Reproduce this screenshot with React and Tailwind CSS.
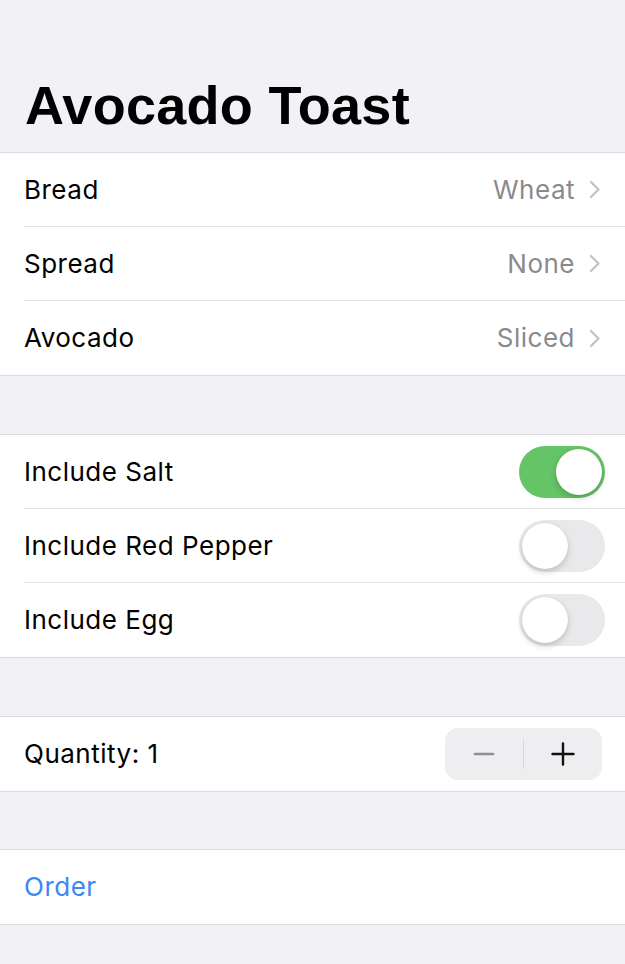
import { useState } from 'react';

const body = { fontFamily: 'Inter, "Liberation Sans", sans-serif' };

function Chevron() {
  return (
    <svg width="12" height="19" viewBox="0 0 12 19" className="ml-[14px]">
      <path d="M2 2 L9.5 9.5 L2 17" fill="none" stroke="#c4c4c8" strokeWidth="2.4" strokeLinecap="round" strokeLinejoin="round" />
    </svg>
  );
}

function Toggle({ on, onChange }) {
  return (
    <button
      onClick={onChange}
      className={`relative w-[86px] h-[52px] rounded-full transition-colors ${on ? 'bg-[#65c466]' : 'bg-[#e9e9eb]'}`}
    >
      <span
        className={`absolute top-[3px] w-[46px] h-[46px] rounded-full bg-white shadow-[0_3px_6px_rgba(0,0,0,0.18),0_0_1px_rgba(0,0,0,0.12)] transition-all ${
          on ? 'left-[37px]' : 'left-[3px]'
        }`}
      />
    </button>
  );
}

function Section({ children }) {
  return <div className="bg-white border-y border-[#dcdce0]">{children}</div>;
}

function Row({ children, last }) {
  return (
    <div className={`ml-[24px] h-[74px] flex items-center ${last ? 'h-[73px]' : 'border-b border-[#e2e2e6]'}`}>
      {children}
    </div>
  );
}

export default function App() {
  const [salt, setSalt] = useState(true);
  const [pepper, setPepper] = useState(false);
  const [egg, setEgg] = useState(false);
  const [qty, setQty] = useState(1);

  const pickers = [
    ['Bread', 'Wheat'],
    ['Spread', 'None'],
    ['Avocado', 'Sliced'],
  ];
  const toggles = [
    ['Include Salt', salt, () => setSalt(!salt)],
    ['Include Red Pepper', pepper, () => setPepper(!pepper)],
    ['Include Egg', egg, () => setEgg(!egg)],
  ];

  return (
    <div className="min-h-[964px] bg-[#f1f1f6] text-black text-[26px] leading-none tracking-[0.5px]" style={body}>
      {/* Large title */}
      <div className="h-[152px] flex items-end px-[25px] pb-[20px]">
        <h1
          className="text-[54px] font-bold leading-none tracking-[0.3px]"
          style={{ fontFamily: '"Liberation Sans", Arial, sans-serif' }}
        >
          Avocado Toast
        </h1>
      </div>

      {/* Pickers */}
      <Section>
        {pickers.map(([label, value], i) => (
          <Row key={label} last={i === pickers.length - 1}>
            <span className="flex-1">{label}</span>
            <span className="text-[#8a8a8e]">{value}</span>
            <span className="pr-[24px] flex items-center">
              <Chevron />
            </span>
          </Row>
        ))}
      </Section>

      <div className="h-[58px]" />

      {/* Toggles */}
      <Section>
        {toggles.map(([label, on, change], i) => (
          <Row key={label} last={i === toggles.length - 1}>
            <span className="flex-1">{label}</span>
            <span className="pr-[20px] flex items-center">
              <Toggle on={on} onChange={change} />
            </span>
          </Row>
        ))}
      </Section>

      <div className="h-[58px]" />

      {/* Stepper */}
      <Section>
        <Row last>
          <span className="flex-1">Quantity: {qty}</span>
          <div className="mr-[23px] w-[157px] h-[52px] rounded-[13px] bg-[#eeeef0] flex items-center">
            <button onClick={() => setQty(Math.max(0, qty - 1))} className="flex-1 h-full flex items-center justify-center">
              <svg width="22" height="22" viewBox="0 0 22 22">
                <path d="M2 11 H20" stroke="#8e8e93" strokeWidth="2.6" strokeLinecap="round" />
              </svg>
            </button>
            <div className="w-px h-[30px] bg-[#d6d6da]" />
            <button onClick={() => setQty(qty + 1)} className="flex-1 h-full flex items-center justify-center">
              <svg width="24" height="24" viewBox="0 0 24 24">
                <path d="M1.5 12 H22.5 M12 1.5 V22.5" stroke="#111" strokeWidth="2.4" strokeLinecap="round" />
              </svg>
            </button>
          </div>
        </Row>
      </Section>

      <div className="h-[57px]" />

      {/* Order */}
      <Section>
        <Row last>
          <button className="text-[#3b87f5]">Order</button>
        </Row>
      </Section>
    </div>
  );
}
